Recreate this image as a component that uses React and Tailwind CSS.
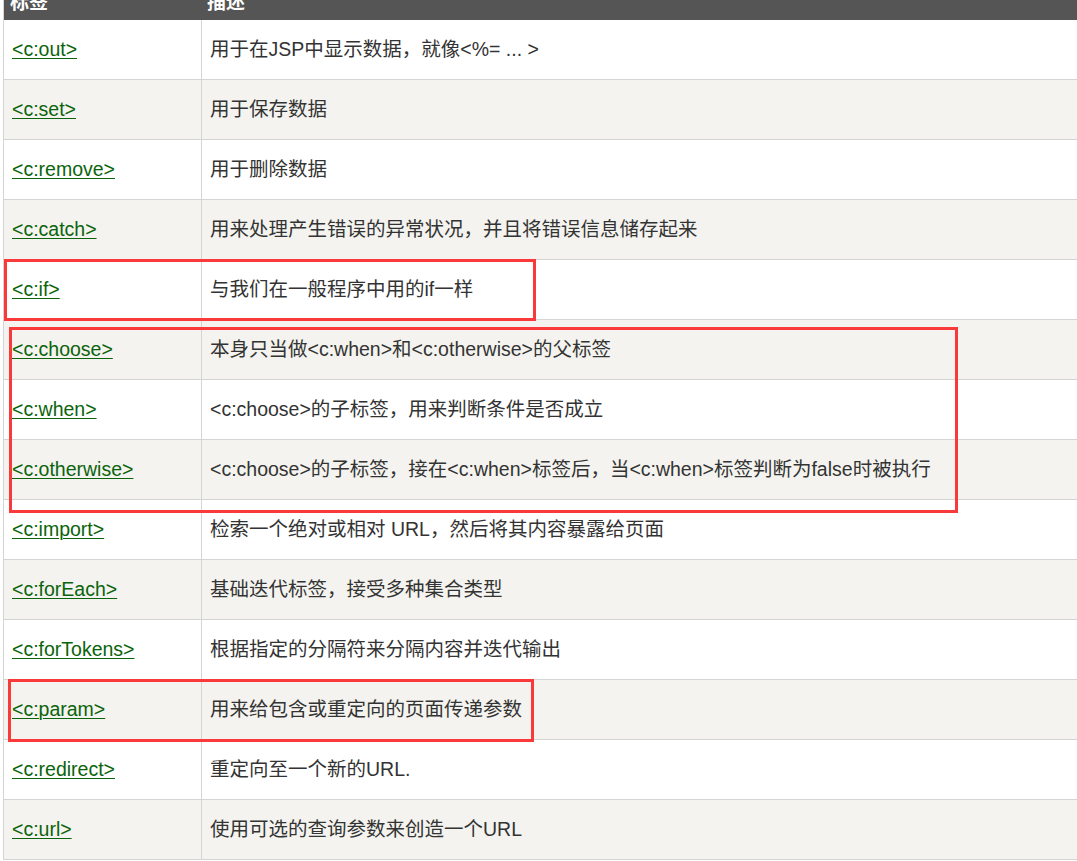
import React from "react";

const rows = [
  ["<c:out>", "用于在JSP中显示数据，就像<%= ... >"],
  ["<c:set>", "用于保存数据"],
  ["<c:remove>", "用于删除数据"],
  ["<c:catch>", "用来处理产生错误的异常状况，并且将错误信息储存起来"],
  ["<c:if>", "与我们在一般程序中用的if一样"],
  ["<c:choose>", "本身只当做<c:when>和<c:otherwise>的父标签"],
  ["<c:when>", "<c:choose>的子标签，用来判断条件是否成立"],
  ["<c:otherwise>", "<c:choose>的子标签，接在<c:when>标签后，当<c:when>标签判断为false时被执行"],
  ["<c:import>", "检索一个绝对或相对 URL，然后将其内容暴露给页面"],
  ["<c:forEach>", "基础迭代标签，接受多种集合类型"],
  ["<c:forTokens>", "根据指定的分隔符来分隔内容并迭代输出"],
  ["<c:param>", "用来给包含或重定向的页面传递参数"],
  ["<c:redirect>", "重定向至一个新的URL."],
  ["<c:url>", "使用可选的查询参数来创造一个URL"],
];

export default function App() {
  return (
    <div
      className="relative w-[1077px] h-[861px] overflow-hidden bg-white"
      style={{ fontFamily: '"Liberation Sans", "Noto Sans CJK SC", sans-serif' }}
    >
      <div className="ml-[3px] w-[1100px] border-l border-[#d4d4d4]">
        <div className="flex h-[20px] bg-[#555555] text-white font-bold text-[19px] overflow-hidden">
          <div className="w-[198px] shrink-0 pl-[6px] flex items-end pb-[7px] leading-[20px]">标签</div>
          <div className="flex-1 pl-[5px] flex items-end pb-[7px] leading-[20px]">描述</div>
        </div>
        {rows.map(([tag, desc], i) => (
          <div
            key={tag}
            className={
              "flex h-[60px] border-b border-[#d4d4d4] text-[19.5px] " +
              (i % 2 === 0 ? "bg-white" : "bg-[#f4f3ef]")
            }
          >
            <div className="w-[198px] shrink-0 border-r border-[#d4d4d4] pl-[8px] pt-[1px] flex items-center">
              <a href="#" className="text-[#0b640b] underline underline-offset-[2px] decoration-[1px]">
                {tag}
              </a>
            </div>
            <div className="flex-1 pl-[8px] pt-[1px] flex items-center text-[#333333]">{desc}</div>
          </div>
        ))}
      </div>

      <div className="absolute left-[4px] top-[259px] w-[532px] h-[62px] border-[3px] border-[#fa3a3a]" />
      <div className="absolute left-[9px] top-[327px] w-[949px] h-[186px] border-[3px] border-[#fa3a3a]" />
      <div className="absolute left-[8px] top-[679px] w-[526px] h-[63px] border-[3px] border-[#fa3a3a]" />
    </div>
  );
}
